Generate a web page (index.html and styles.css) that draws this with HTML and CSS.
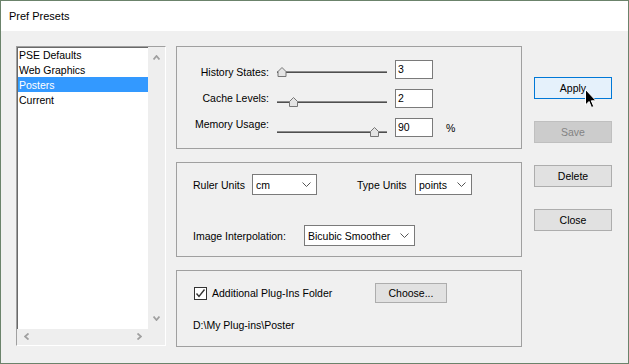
FILE: index.html
```html
<!DOCTYPE html>
<html lang="en">
<head>
    <meta charset="UTF-8">
    <title>Pref Presets</title>
    <link rel="stylesheet" href="styles.css">
</head>
<body>
    <div class="window">
        <div class="titlebar">Pref Presets</div>

        <div class="content">
            <!-- preset list -->
            <div class="listbox">
                <ul class="items">
                    <li>PSE Defaults</li>
                    <li>Web Graphics</li>
                    <li class="selected">Posters</li>
                    <li>Current</li>
                </ul>
                <div class="vscroll">
                    <svg width="7" height="5" viewBox="0 0 7 5"><path d="M0.5 4.5 L3.5 1 L6.5 4.5" class="chev"/></svg>
                    <svg width="7" height="5" viewBox="0 0 7 5"><path d="M0.5 0.5 L3.5 4 L6.5 0.5" class="chev"/></svg>
                </div>
                <div class="hscroll">
                    <svg width="5" height="7" viewBox="0 0 5 7"><path d="M4.5 0.5 L1 3.5 L4.5 6.5" class="chev"/></svg>
                    <svg width="5" height="7" viewBox="0 0 5 7"><path d="M0.5 0.5 L4 3.5 L0.5 6.5" class="chev"/></svg>
                </div>
                <div class="corner"></div>
            </div>

            <div class="groups">
                <!-- memory settings -->
                <div class="group group-memory">
                    <div class="slider-row">
                        <span class="slider-label label-history">History States:</span>
                        <svg class="slider" width="110" height="19" viewBox="0 0 110 19">
                            <rect x="0" y="11" width="110" height="1" fill="#8c8c8c"/>
                            <rect x="0" y="12" width="110" height="1" fill="#4f4f4f"/>
                            <path d="M1 16.5 V11.5 L5 7.5 L9 11.5 V16.5 Z" class="thumb"/>
                        </svg>
                        <div class="field">3</div>
                    </div>
                    <div class="slider-row">
                        <span class="slider-label label-cache">Cache Levels:</span>
                        <svg class="slider slider-cache" width="110" height="19" viewBox="0 0 110 19">
                            <rect x="0" y="11" width="110" height="1" fill="#8c8c8c"/>
                            <rect x="0" y="12" width="110" height="1" fill="#4f4f4f"/>
                            <path d="M12.5 16.5 V11.5 L16.5 7.5 L20.5 11.5 V16.5 Z" class="thumb"/>
                        </svg>
                        <div class="field">2</div>
                    </div>
                    <div class="slider-row">
                        <span class="slider-label">Memory Usage:</span>
                        <svg class="slider slider-memory" width="110" height="19" viewBox="0 0 110 19">
                            <rect x="0" y="11" width="110" height="1" fill="#8c8c8c"/>
                            <rect x="0" y="12" width="110" height="1" fill="#4f4f4f"/>
                            <path d="M93.5 16.5 V11.5 L97.5 7.5 L101.5 11.5 V16.5 Z" class="thumb"/>
                        </svg>
                        <div class="field">90</div>
                        <span class="unit">%</span>
                    </div>
                </div>

                <!-- units -->
                <div class="group group-units">
                    <div class="units-row">
                        <span class="label-ruler">Ruler Units</span>
                        <div class="select select-cm">
                            <span>cm</span>
                            <svg width="9" height="5" viewBox="0 0 9 5"><path d="M0.5 0.5 L4.5 4.5 L8.5 0.5" class="drop"/></svg>
                        </div>
                        <span class="label-type">Type Units</span>
                        <div class="select select-points">
                            <span>points</span>
                            <svg width="9" height="5" viewBox="0 0 9 5"><path d="M0.5 0.5 L4.5 4.5 L8.5 0.5" class="drop"/></svg>
                        </div>
                    </div>
                    <div class="units-row interp-row">
                        <span class="label-interp">Image Interpolation:</span>
                        <div class="select select-interp">
                            <span>Bicubic Smoother</span>
                            <svg width="9" height="5" viewBox="0 0 9 5"><path d="M0.5 0.5 L4.5 4.5 L8.5 0.5" class="drop"/></svg>
                        </div>
                    </div>
                </div>

                <!-- plug-ins -->
                <div class="group group-plugins">
                    <div class="plugin-row">
                        <svg class="checkbox" width="13" height="13" viewBox="0 0 13 13">
                            <rect x="0.5" y="0.5" width="12" height="12" fill="#fff" stroke="#333"/>
                            <path d="M2.5 6.5 L5 9.5 L10.5 2.5" fill="none" stroke="#333" stroke-width="1.4"/>
                        </svg>
                        <span class="check-label">Additional Plug-Ins Folder</span>
                        <div class="btn btn-choose">Choose...</div>
                    </div>
                    <div class="plugin-path">D:\My Plug-ins\Poster</div>
                </div>
            </div>

            <div class="actions">
                <div class="btn btn-default">Apply</div>
                <div class="btn btn-disabled">Save</div>
                <div class="btn">Delete</div>
                <div class="btn">Close</div>
            </div>
        </div>

        <svg class="cursor" width="13" height="20" viewBox="0 0 13 20">
            <path d="M0.5 0.5 V16 L4 12.5 L6.5 18.5 L8.8 17.5 L6.3 11.8 H11 Z" fill="#000" stroke="#fff"/>
        </svg>
    </div>
</body>
</html>
```

FILE: styles.css
```css
body {
    margin: 0;
    background: #fff;
}
.window {
    position: relative;
    width: 629px;
    height: 364px;
    box-sizing: border-box;
    border: 1px solid #6b836b;
    background: #f0f0f0;
    font-family: 'Liberation Sans', Arial, sans-serif;
    font-size: 10.5px;
    color: #000;
    overflow: hidden;
}
.titlebar {
    height: 30px;
    background: #fff;
    padding-left: 8px;
    line-height: 31px;
    font-size: 11px;
}
.content {
    display: flex;
    align-items: flex-start;
    padding: 15px 0 0 15px;
}

/* list box */
.listbox {
    width: 150px;
    height: 300px;
    box-sizing: border-box;
    border: 1px solid;
    border-color: #a0a0a0 #fff #fff #a0a0a0;
    box-shadow: inset 1px 1px 0 #696969;
    background: #fff;
    display: grid;
    grid-template-columns: 131px 17px;
    grid-template-rows: 282px 16px;
}
.items {
    list-style: none;
    margin: 0;
    padding: 0 0 0 1px;
}
.items li {
    height: 15px;
    line-height: 17px;
    padding-left: 1px;
    overflow: hidden;
}
.items li.selected {
    background: #3399ff;
    color: #fff;
}
.vscroll {
    background: #eee;
    display: flex;
    flex-direction: column;
    justify-content: space-between;
    align-items: center;
    padding: 8px 0 8px;
}
.hscroll {
    background: #eee;
    display: flex;
    justify-content: space-between;
    align-items: center;
    padding: 0 6px 2px 7px;
}
.corner {
    background: #eee;
}
.chev {
    fill: none;
    stroke: #a0a0a0;
    stroke-width: 1.8;
}
.vscroll svg,
.hscroll svg {
    display: block;
}

/* groups */
.groups {
    display: flex;
    flex-direction: column;
    gap: 13px;
    margin-left: 10px;
    width: 346px;
}
.group {
    box-sizing: border-box;
    border: 1px solid #a0a0a0;
}
.group-memory {
    height: 103px;
    padding: 13px 0 0 1px;
}
.slider-row {
    display: flex;
    align-items: flex-start;
    height: 19px;
    margin-bottom: 10px;
}
.slider-label {
    width: 91px;
    margin-right: 8px;
    text-align: right;
    line-height: 13px;
}
.label-history {
    margin-top: 6px;
}
.label-cache {
    margin-top: 3px;
}
.slider {
    display: block;
    margin-right: 8px;
}
.slider-cache {
    margin-top: 1px;
}
.slider-memory {
    margin-top: 2px;
}
.thumb {
    fill: #e4e4e4;
    stroke: #767676;
}
.field {
    width: 38px;
    height: 19px;
    box-sizing: border-box;
    border: 1px solid #7a7a7a;
    background: #fff;
    padding-left: 2px;
    line-height: 17px;
}
.unit {
    margin: 4px 0 0 13px;
    line-height: 13px;
}

.group-units {
    height: 95px;
    padding: 11px 0 0 16px;
}
.units-row {
    display: flex;
    align-items: center;
    height: 21px;
}
.interp-row {
    margin-top: 30px;
}
.label-ruler {
    width: 59px;
}
.label-type {
    width: 58px;
    margin-left: 40px;
}
.label-interp {
    width: 111px;
}
.select {
    height: 21px;
    box-sizing: border-box;
    border: 1px solid #7a7a7a;
    background: #fff;
    display: flex;
    align-items: center;
    justify-content: space-between;
    padding: 0 5px 0 3px;
}
.select svg {
    display: block;
}
.select-cm {
    width: 65px;
}
.select-points {
    width: 57px;
}
.select-interp {
    width: 111px;
}
.drop {
    fill: none;
    stroke: #555;
}

.group-plugins {
    height: 77px;
    padding: 12px 0 0 16px;
}
.plugin-row {
    display: flex;
    align-items: center;
    height: 20px;
}
.checkbox {
    display: block;
    margin-left: 1px;
}
.check-label {
    width: 163px;
    margin-left: 5px;
}
.plugin-path {
    margin-top: 16px;
    line-height: 13px;
}

/* buttons */
.actions {
    display: flex;
    flex-direction: column;
    gap: 22px;
    margin-left: 12px;
    padding-top: 31px;
}
.btn {
    width: 78px;
    height: 22px;
    box-sizing: border-box;
    border: 1px solid #adadad;
    background: #e1e1e1;
    display: flex;
    align-items: center;
    justify-content: center;
}
.btn-default {
    border-color: #0078d7;
    background: #e5f1fb;
}
.btn-disabled {
    border-color: #bfbfbf;
    background: #cccccc;
    color: #838383;
}
.btn-choose {
    width: 72px;
    height: 20px;
}

.cursor {
    position: absolute;
    left: 584px;
    top: 88px;
}
```
